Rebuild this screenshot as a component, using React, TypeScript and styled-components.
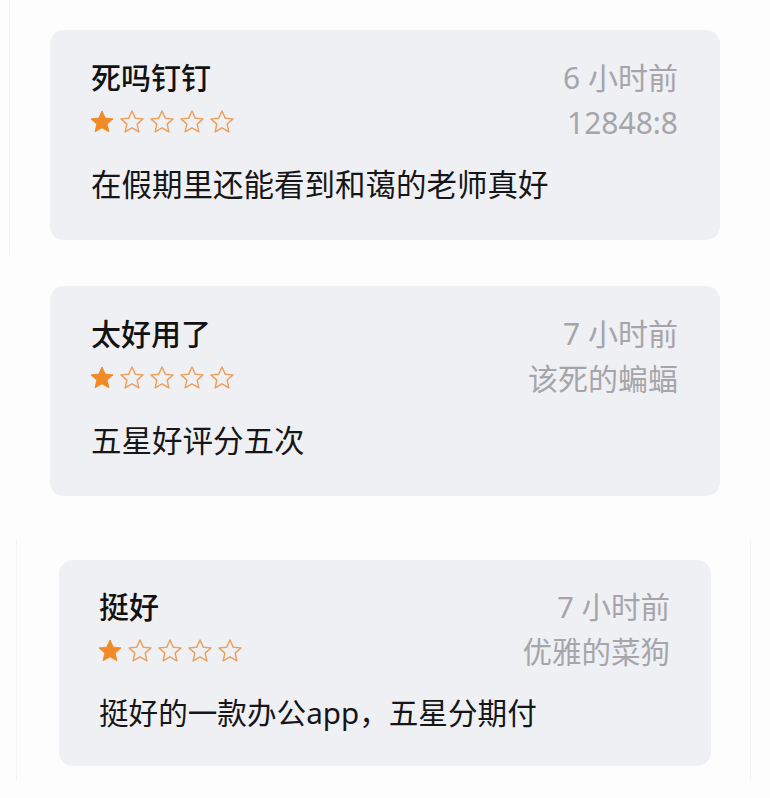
import React from 'react';
import styled, { createGlobalStyle } from 'styled-components';

interface Review {
  title: string;
  time: string;
  author: string;
  rating: number;
  body: string;
}

const reviews: Review[] = [
  { title: '死吗钉钉', time: '6 小时前', author: '12848:8', rating: 1, body: '在假期里还能看到和蔼的老师真好' },
  { title: '太好用了', time: '7 小时前', author: '该死的蝙蝠', rating: 1, body: '五星好评分五次' },
  { title: '挺好', time: '7 小时前', author: '优雅的菜狗', rating: 1, body: '挺好的一款办公app，五星分期付' },
];

const GlobalStyle = createGlobalStyle`
  html, body {
    margin: 0;
    padding: 0;
    background: #fdfdfd;
  }
  body {
    font-family: "Noto Sans", "Noto Sans CJK SC", sans-serif;
    -webkit-font-smoothing: antialiased;
  }
`;

const Star: React.FC<{ filled: boolean }> = ({ filled }) => (
  <svg width="24" height="24" viewBox="2 2 20 20">
    <path
      d="M12 2.8l2.7 6 6.5.62-4.9 4.35 1.45 6.4L12 16.85l-5.75 3.32 1.45-6.4-4.9-4.35 6.5-.62z"
      fill={filled ? '#f18b26' : 'none'}
      stroke={filled ? '#f18b26' : '#eaa05e'}
      strokeWidth={filled ? 0.8 : 1.2}
      strokeLinejoin="round"
    />
  </svg>
);

const ReviewCard: React.FC<{ review: Review; compact?: boolean }> = ({ review, compact }) => (
  <Card $compact={compact}>
    <Header>
      <Left>
        <Title>{review.title}</Title>
        <Stars>
          {[0, 1, 2, 3, 4].map(i => (
            <Star key={i} filled={i < review.rating} />
          ))}
        </Stars>
      </Left>
      <Right>
        <Meta $compact={compact}>{review.time}</Meta>
        <Meta $compact={compact} $gap>
          {review.author}
        </Meta>
      </Right>
    </Header>
    <Body $compact={compact}>{review.body}</Body>
  </Card>
);

const App: React.FC = () => (
  <>
    <GlobalStyle />
    <Page>
      <Shot $variant="top">
        <ReviewCard review={reviews[0]} />
      </Shot>
      <Shot $variant="middle">
        <ReviewCard review={reviews[1]} />
      </Shot>
      <Shot $variant="bottom">
        <ReviewCard review={reviews[2]} compact />
      </Shot>
    </Page>
  </>
);

const Page = styled.div`
  display: flex;
  flex-direction: column;
  width: 770px;
  height: 798px;
  overflow: hidden;
`;

const Shot = styled.div<{ $variant: 'top' | 'middle' | 'bottom' }>`
  box-sizing: border-box;
  display: flex;
  ${p =>
    p.$variant === 'top'
      ? `
    margin-left: 9px;
    height: 255px;
    padding: 30px 0 0 40px;
    border-left: 1px solid #f1f1f1;
  `
      : p.$variant === 'middle'
      ? `
    height: 285px;
    padding: 31px 0 0 50px;
  `
      : `
    margin: 0 19px 0 16px;
    height: 240px;
    padding: 20px 0 0 42px;
    border-left: 1px solid #f3f3f3;
    border-right: 1px solid #f3f3f3;
  `}
`;

const Card = styled.div<{ $compact?: boolean }>`
  box-sizing: border-box;
  width: ${p => (p.$compact ? 652 : 670)}px;
  height: ${p => (p.$compact ? 206 : 210)}px;
  padding: ${p => (p.$compact ? '27px 41px 0 40px' : '28px 42px 0 41px')};
  background: #eff0f4;
  border-radius: 14px;
  display: flex;
  flex-direction: column;
`;

const Header = styled.div`
  display: flex;
  justify-content: space-between;
  align-items: flex-start;
`;

const Left = styled.div`
  display: flex;
  flex-direction: column;
`;

const Right = styled.div`
  display: flex;
  flex-direction: column;
  align-items: flex-end;
`;

const Title = styled.div`
  font-size: 30px;
  line-height: 40px;
  font-weight: 500;
  color: #121212;
`;

const Stars = styled.div`
  display: flex;
  align-items: center;
  gap: 6px;
  height: 32px;
  margin-top: 8px;
  margin-left: -1px;
`;

const Meta = styled.div<{ $gap?: boolean; $compact?: boolean }>`
  font-size: ${p => (p.$compact ? 29.5 : 30)}px;
  line-height: 40px;
  color: #a5a5aa;
  margin-top: ${p => (p.$gap ? 5 : 0)}px;
`;

const Body = styled.div<{ $compact?: boolean }>`
  margin-top: 21px;
  font-size: ${p => (p.$compact ? 29.6 : 30.5)}px;
  line-height: 40px;
  color: #161616;
`;

export default App;
